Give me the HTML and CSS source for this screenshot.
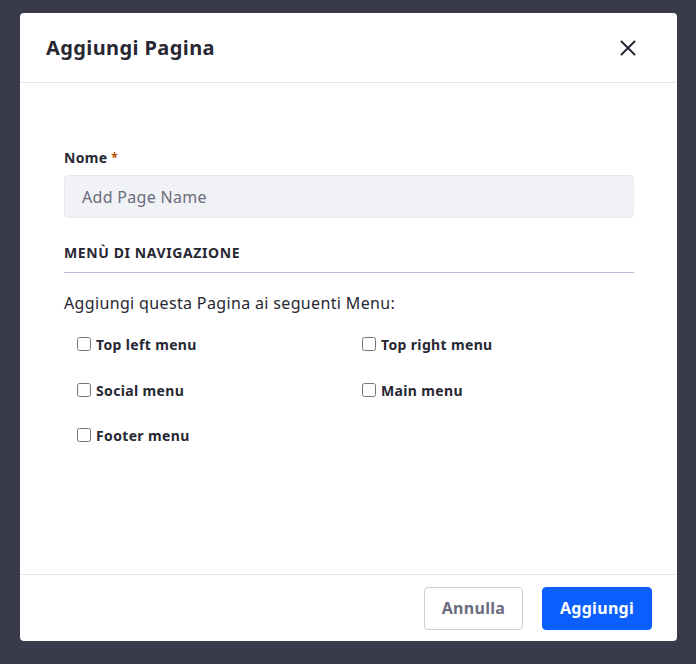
FILE: index.html
```html
<!DOCTYPE html>
<html lang="it">
<head>
<meta charset="utf-8">
<title>Aggiungi Pagina</title>
<link rel="stylesheet" href="styles.css">
</head>
<body>
<div class="modal">
  <div class="modal-header">
    <h1 class="modal-title">Aggiungi Pagina</h1>
    <button class="close" aria-label="Chiudi">
      <svg width="16" height="16" viewBox="0 0 16 16"><path d="M1.5 1.5 L14.5 14.5 M14.5 1.5 L1.5 14.5" stroke="#272833" stroke-width="2" stroke-linecap="round" fill="none"/></svg>
    </button>
  </div>
  <div class="modal-body">
    <label class="field-label" for="name">Nome <span class="req">*</span></label>
    <input class="field-input" id="name" type="text" placeholder="Add Page Name">
    <h2 class="section-title">MENÙ DI NAVIGAZIONE</h2>
    <p class="intro">Aggiungi questa Pagina ai seguenti Menu:</p>
    <div class="menus">
      <label class="check"><input type="checkbox"><span>Top left menu</span></label>
      <label class="check"><input type="checkbox"><span>Top right menu</span></label>
      <label class="check"><input type="checkbox"><span>Social menu</span></label>
      <label class="check"><input type="checkbox"><span>Main menu</span></label>
      <label class="check"><input type="checkbox"><span>Footer menu</span></label>
    </div>
  </div>
  <div class="modal-footer">
    <button class="btn btn-secondary">Annulla</button>
    <button class="btn btn-primary">Aggiungi</button>
  </div>
</div>
</body>
</html>
```
FILE: styles.css
```css
* { box-sizing: border-box; }
html, body { margin: 0; height: 100%; }
body {
  background: #393a4a;
  font-family: "Noto Sans", "Open Sans", sans-serif;
  color: #272833;
  padding: 13px 19px 0 20px;
}
.modal {
  width: 657px;
  height: 628px;
  background: #fff;
  border-radius: 4px;
  display: flex;
  flex-direction: column;
  overflow: hidden;
}
.modal-header {
  height: 70px;
  border-bottom: 1px solid #e7e7ed;
  display: flex;
  align-items: center;
  justify-content: space-between;
  padding: 0 41px 0 26px;
  flex: none;
}
.modal-title {
  margin: 0;
  font-size: 20px;
  font-weight: 700;
  letter-spacing: 0.4px;
  color: #272833;
}
.close {
  border: 0;
  background: none;
  padding: 0;
  width: 16px;
  height: 16px;
  display: flex;
  cursor: pointer;
}
.modal-body {
  flex: 1;
  padding: 66px 43px 0 44px;
}
.field-label {
  display: block;
  font-size: 14px;
  font-weight: 700;
  line-height: 18px;
  margin-bottom: 8px;
  letter-spacing: 0.3px;
}
.req { color: #b95000; font-size: 12px; vertical-align: top; }
.field-input {
  display: block;
  width: 100%;
  height: 43px;
  background: #f1f2f5;
  border: 1px solid #e7e7ed;
  border-radius: 4px;
  padding: 0 17px;
  font-family: inherit;
  font-size: 16px;
  letter-spacing: 0.3px;
  color: #272833;
}
.field-input::placeholder { color: #6b6c7e; }
.section-title {
  margin: 26px 0 0;
  font-size: 14px;
  font-weight: 700;
  line-height: 18px;
  letter-spacing: 0.6px;
  padding-bottom: 10px;
  border-bottom: 1px solid #bdbbd4;
}
.intro {
  margin: 19px 0 0;
  font-size: 16px;
  line-height: 22px;
  letter-spacing: 0.35px;
}
.menus {
  display: grid;
  grid-template-columns: 285px 285px;
  row-gap: 23.5px;
  margin-top: 20px;
  padding-left: 13px;
}
.check {
  display: flex;
  align-items: center;
  gap: 5px;
  font-size: 14px;
  font-weight: 700;
  line-height: 22px;
  letter-spacing: 0.35px;
}
.check input {
  margin: 0;
  width: 14px;
  height: 14px;
  position: relative;
  top: -1px;
}
.modal-footer {
  flex: none;
  height: 67px;
  border-top: 1px solid #e7e7ed;
  display: flex;
  justify-content: flex-end;
  align-items: center;
  gap: 19px;
  padding: 0 25px 0 0;
}
.btn {
  height: 43px;
  border-radius: 4px;
  font-family: inherit;
  font-size: 16px;
  font-weight: 700;
  letter-spacing: 0.3px;
  padding: 0 10px;
  cursor: pointer;
}
.btn-secondary {
  background: #fff;
  border: 1px solid #cdced9;
  color: #6b6c7e;
  width: 99px;
}
.btn-primary {
  background: #0b5fff;
  border: 1px solid #0b5fff;
  color: #fff;
  width: 110px;
}
```
